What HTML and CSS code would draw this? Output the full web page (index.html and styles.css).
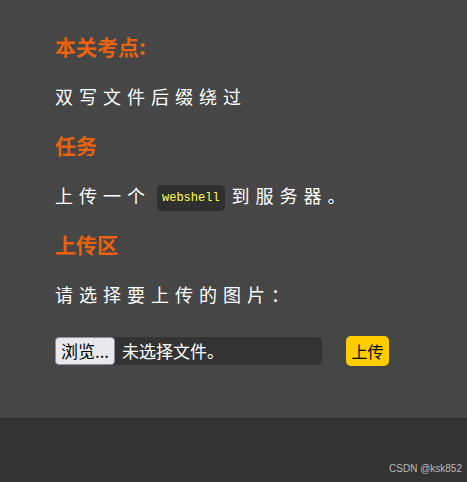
FILE: index.html
```html
<!DOCTYPE html>
<html lang="zh-CN">
<head>
    <meta charset="UTF-8">
    <meta name="viewport" content="width=device-width, initial-scale=1.0">
    <title>Upload</title>
    <link rel="stylesheet" href="styles.css">
</head>
<body>
    <main class="content">
        <h2 class="title">本关考点:</h2>
        <p class="text">双写文件后缀绕过</p>

        <h2 class="title">任务</h2>
        <p class="text">上传一个<code>webshell</code>到服务器。</p>

        <h2 class="title">上传区</h2>
        <p class="text">请选择要上传的图片：</p>

        <form class="upload-form">
            <label class="file-input">
                <span class="file-button">浏览...</span>
                <span class="file-name">未选择文件。</span>
            </label>
            <button type="button" class="submit">上传</button>
        </form>
    </main>
    <footer>
        <span class="mark">CSDN @ksk852</span>
    </footer>
</body>
</html>
```

FILE: styles.css
```css
/* Basic reset */
* {
    margin: 0;
    padding: 0;
    box-sizing: border-box;
}

body {
    font-family: 'Noto Sans CJK SC', 'Noto Sans', sans-serif;
    background-color: #464646;
    color: #fff;
    height: 482px;
    display: flex;
    flex-direction: column;
}

/* Main content */
.content {
    padding: 32px 55px 0;
    height: 418px;
}

.content .title {
    font-size: 21px;
    font-weight: bold;
    color: #e8620f;
    line-height: 28px;
    margin-bottom: 23px;
}

.content .text {
    font-size: 18px;
    letter-spacing: 6px;
    line-height: 26px;
    margin-bottom: 22px;
}

.content .text code {
    font-family: 'Liberation Mono', monospace;
    font-size: 12px;
    line-height: 1;
    letter-spacing: 0;
    color: #ffff55;
    background-color: #2f2f2f;
    padding: 6px 5px;
    margin: 0 7px 0 6px;
    border-radius: 5px;
    vertical-align: 2px;
}

/* Upload form */
.upload-form {
    display: flex;
    align-items: center;
    gap: 24px;
    margin-top: 29px;
}

.file-input {
    display: flex;
    width: 267px;
    height: 28px;
    background-color: #333;
    border-radius: 5px;
    font-size: 17px;
}

.file-button {
    width: 60px;
    height: 28px;
    line-height: 26px;
    text-align: center;
    color: #000;
    background-color: #e9e9ed;
    border: 1px solid #8f8f9d;
    border-radius: 4px;
}

.file-name {
    line-height: 28px;
    padding-left: 7px;
}

.submit {
    font-family: inherit;
    font-size: 16px;
    color: #000;
    background-color: #ffcc00;
    border: none;
    border-radius: 5px;
    width: 43px;
    height: 30px;
}

/* Footer */
footer {
    flex: 1;
    background-color: #333;
    display: flex;
    align-items: flex-end;
    justify-content: flex-end;
    padding: 0 5px 8px 0;
}

footer .mark {
    font-family: 'Liberation Sans', Arial, sans-serif;
    font-size: 10px;
    color: #bbb;
}
```
